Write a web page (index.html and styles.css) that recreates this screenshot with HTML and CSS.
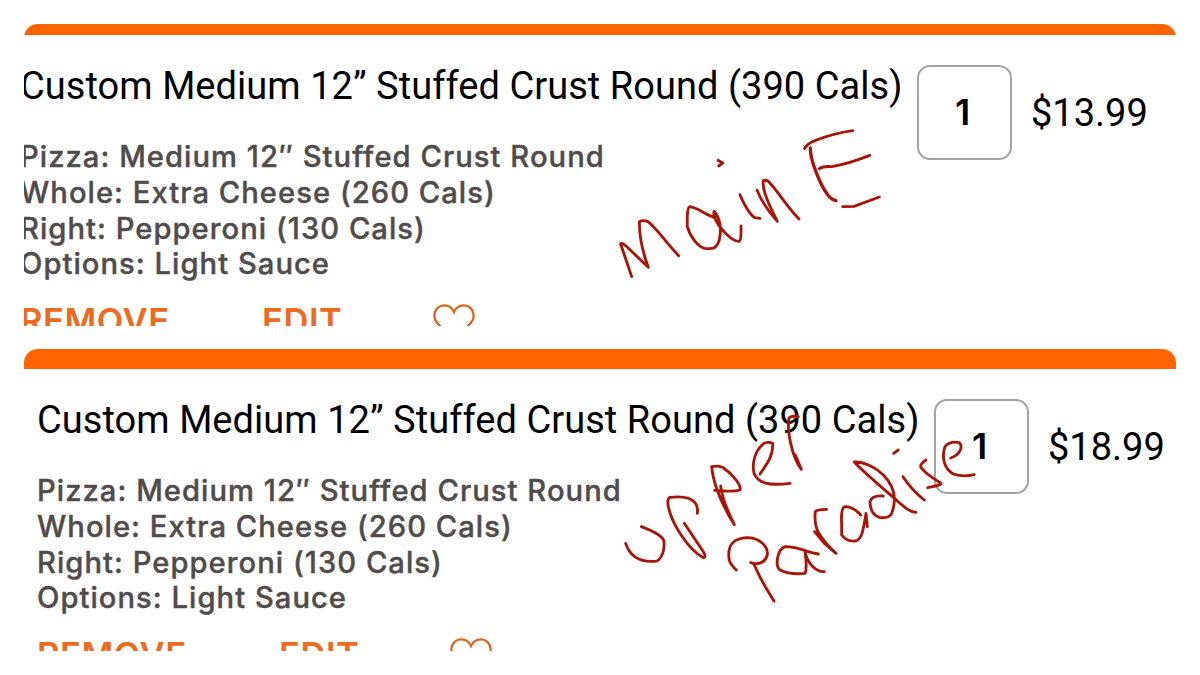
FILE: index.html
```html
<!DOCTYPE html>
<html lang="en">
<head>
    <meta charset="UTF-8">
    <meta name="viewport" content="width=device-width, initial-scale=1.0">
    <title>Pizza Order</title>
    <link rel="stylesheet" href="styles.css">
</head>
<body>
    <div class="card card-shifted">
        <div class="bar"></div>
        <div class="item">
            <div class="info">
                <h2>Custom Medium 12” Stuffed Crust Round (390 Cals)</h2>
                <ul class="details">
                    <li>Pizza: Medium 12″ Stuffed Crust Round</li>
                    <li>Whole: Extra Cheese (260 Cals)</li>
                    <li>Right: Pepperoni (130 Cals)</li>
                    <li>Options: Light Sauce</li>
                </ul>
                <div class="actions">
                    <span class="remove">REMOVE</span>
                    <span class="edit">EDIT</span>
                    <svg class="heart" viewBox="0 0 126 111"><path d="M63 24C51-2 18-2 7 22C-2 43 10 56 27 72L63 104L99 72C116 56 128 43 119 22C108-2 75-2 63 24Z"/></svg>
                </div>
            </div>
            <div class="qty">1</div>
            <div class="price">$13.99</div>
        </div>
    </div>

    <div class="card">
        <div class="bar"></div>
        <div class="item">
            <div class="info">
                <h2>Custom Medium 12” Stuffed Crust Round (390 Cals)</h2>
                <ul class="details">
                    <li>Pizza: Medium 12″ Stuffed Crust Round</li>
                    <li>Whole: Extra Cheese (260 Cals)</li>
                    <li>Right: Pepperoni (130 Cals)</li>
                    <li>Options: Light Sauce</li>
                </ul>
                <div class="actions">
                    <span class="remove">REMOVE</span>
                    <span class="edit">EDIT</span>
                    <svg class="heart" viewBox="0 0 126 111"><path d="M63 24C51-2 18-2 7 22C-2 43 10 56 27 72L63 104L99 72C116 56 128 43 119 22C108-2 75-2 63 24Z"/></svg>
                </div>
            </div>
            <div class="qty">1</div>
            <div class="price">$18.99</div>
        </div>
    </div>

    <!-- pen marks over both cards -->
    <svg class="notes" viewBox="0 0 1200 675">
        <g transform="translate(600 110) scale(.33333)">
            <path d="M95 500L62 402Q64 396 78 408L145 472Q118 400 118 335Q130 329 144 335C170 355 200 400 236 437"/>
            <path d="M345 322C320 318 300 295 270 290Q260 290 262 350C270 380 295 412 315 415C342 418 350 414 358 390C365 360 362 325 342 304Q338 318 357 347C375 372 400 395 418 394Q424 390 423 348"/>
            <path d="M420 254C430 280 450 315 465 323L480 325"/>
            <path d="M354 151L368 159L356 168"/>
            <path d="M471 241C485 275 510 310 532 334C510 290 485 240 490 212Q497 209 505 214C535 245 560 290 597 327"/>
            <path d="M614 116Q620 102 645 92Q700 70 758 62"/>
            <path class="thick" d="M631 114C630 150 660 222 680 250Q692 268 708 272"/>
            <path d="M658 176Q670 168 695 170Q750 160 809 136"/>
            <path d="M728 290L762 289Q800 275 838 261"/>
        </g>
        <g transform="translate(610 400) scale(.33333)">
            <path d="M94 380Q160 405 162 425C165 465 145 485 135 484C90 487 60 470 47 430"/>
            <path d="M262 340Q265 320 255 308C240 290 215 288 180 292Q170 296 175 320C185 370 235 450 280 473Q290 472 280 455L223 370"/>
            <path d="M332 258Q336 300 373 374C345 330 310 260 305 200Q335 195 345 208C365 220 395 255 390 270Q375 275 345 273L314 271"/>
            <path d="M450 222C470 192 490 170 488 130Q475 124 462 130C435 150 425 190 432 220C445 250 475 258 540 250"/>
            <path d="M565 50Q545 46 537 54C530 90 545 170 574 208L556 165"/>
            <path d="M379 510Q357 490 357 475C352 430 375 415 410 413C450 413 475 440 472 465C465 490 440 495 422 488Q430 485 440 510C455 545 475 575 492 603"/>
            <path d="M625 462C590 458 570 440 525 440C500 450 495 500 510 510Q540 525 585 520Q592 505 585 455C590 480 610 515 643 515"/>
            <path d="M650 328Q620 328 616 335Q612 370 624 395Q640 425 678 460L645 432L614 395"/>
        </g>
        <g transform="translate(800 390) scale(.33333)">
            <path d="M182 375Q160 350 135 350Q122 353 125 400V435Q140 455 165 453C185 452 190 420 198 370L202 410"/>
            <path d="M250 318Q215 315 210 335C210 355 215 375 240 383Q270 385 275 370C290 330 285 290 250 255C225 230 190 215 163 216C180 235 240 288 280 322C310 350 330 367 348 367"/>
            <path d="M309 260Q335 300 373 330"/>
            <path d="M281 190L295 180"/>
            <path d="M378 210Q355 225 365 235Q375 250 420 278Q434 284 383 293"/>
            <path d="M452 204C480 195 490 170 478 158Q450 152 435 170C425 200 430 235 460 252Q490 262 523 254"/>
        </g>
    </svg>
</body>
</html>
```
FILE: styles.css
```css
* {
    box-sizing: border-box;
}
body {
    margin: 0;
    padding: 24px;
    height: 675px;
    background: #fff;
    font-family: Inter, "Liberation Sans", sans-serif;
    overflow: hidden;
    position: relative;
}
.card {
    height: 301.5px;
    margin-bottom: 23.5px;
    border-radius: 14px 14px 0 0;
    overflow: hidden;
}
.bar {
    height: 19.5px;
    background: #ff6400;
}
.card-shifted .bar {
    height: 10.5px;
}
.item {
    display: flex;
    align-items: flex-start;
    padding: 28px 0 0 13px;
}
.card-shifted .item {
    margin-left: -17px;
}
.info {
    flex: none;
    width: 897px;
}
h2 {
    margin: 0;
    padding-top: 1px;
    font-family: Roboto, sans-serif;
    font-size: 38px;
    font-weight: 400;
    line-height: 45px;
    letter-spacing: 0.05px;
    color: #000;
    white-space: nowrap;
}
.details {
    list-style: none;
    margin: 30.6px 0 0;
    padding: 0;
    font-size: 29.2px;
    font-weight: 500;
    line-height: 35.8px;
    letter-spacing: 1.03px;
    color: #504c4c;
    white-space: nowrap;
    -webkit-text-stroke: 0.4px #504c4c;
}
.actions {
    display: flex;
    margin-top: 16.6px;
    font-size: 34.5px;
    font-weight: 600;
    line-height: 43px;
    letter-spacing: 0.55px;
    color: #ec6b21;
}
.remove {
    width: 242px;
}
.edit {
    width: 171px;
}
.heart {
    width: 42px;
    height: 37px;
    margin-top: 5px;
}
.heart path {
    fill: none;
    stroke: #dc6420;
    stroke-width: 7;
}
.qty {
    flex: none;
    width: 95px;
    height: 95px;
    margin-top: 2px;
    padding-right: 4px;
    border: 2px solid #a3a3a3;
    border-radius: 13px;
    font-size: 36px;
    font-weight: 600;
    line-height: 91px;
    text-align: center;
}
.price {
    margin: 27px 0 0 19px;
    font-family: Roboto, sans-serif;
    font-size: 38px;
    line-height: 46px;
}
.notes {
    position: absolute;
    top: 0;
    left: 0;
    width: 1200px;
    height: 675px;
}
.notes path {
    fill: none;
    stroke: #a81408;
    stroke-width: 8.5;
    stroke-linecap: round;
    stroke-linejoin: round;
}
.notes .thick {
    stroke-width: 10;
}
```
